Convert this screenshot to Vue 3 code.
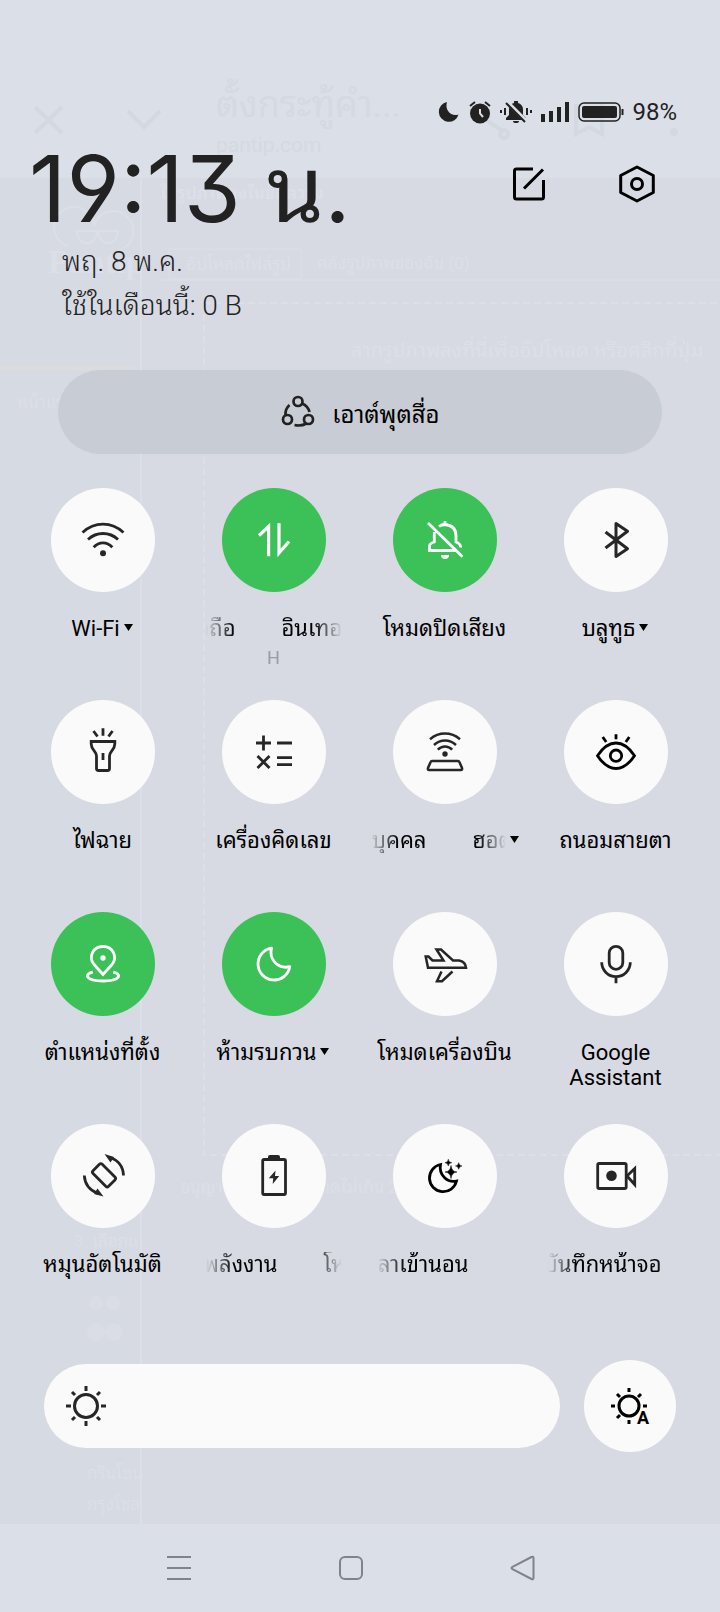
<template>
  <div class="panel">
    <!-- web page showing faintly through the shade -->
    <svg class="backdrop" width="720" height="1612" viewBox="0 0 720 1612" aria-hidden="true">
      <rect y="178" width="720" height="1346" fill="#d7dae3" />
      <rect y="178" width="141" height="1346" fill="#d6dae2" />
      <g fill="none" stroke="#d4d8e0" stroke-width="4">
        <path d="M35 107l27 26M62 107l-27 26M128 111l16 16 16-16M576 104v30l13-7 13 7v-30M482 117l22 15" />
        <circle cx="504" cy="134" r="4" />
      </g>
      <circle cx="674" cy="132" r="4" fill="#d4d8e0" />
      <g fill="#d5d9e1">
        <text x="216" y="117" font-size="36">ตั้งกระทู้คำ...</text>
        <text x="216" y="152" font-size="21">pantip.com</text>
      </g>
      <g fill="none" stroke="#dcdfe7" stroke-width="2">
        <path d="M141 178v1346" />
        <path d="M169 249h132v30h-132z" stroke-width="1" />
        <path d="M158 280h562" stroke-width="1" />
        <path d="M204 303h516M204 303v852h516" stroke-dasharray="7 4" />
        <path d="M68 246a20 20 0 1 1 26-20a20 20 0 1 1 30 22M77 231h20a9 11 0 0 1-20 0zM98 231h20a9 11 0 0 1-20 0z" />
      </g>
      <path d="M0 368h135" stroke="#dadcdf" stroke-width="5" />
      <g fill="#dcdfe8" font-size="17">
        <text x="48" y="273" font-size="34" font-weight="700" font-family="Liberation Serif, serif">Pantip</text>
        <text x="160" y="199" font-weight="700">ใส่รูปภาพลงในข้อความ</text>
        <text x="186" y="270">อัปโหลดไฟล์รูป</text>
        <text x="317" y="269">คลังรูปภาพของฉัน (0)</text>
        <text x="351" y="357" font-size="20">ลากรูปภาพลงที่นี่เพื่ออัปโหลด หรือคลิกที่ปุ่ม</text>
        <text x="17" y="408">หน้าแรก</text>
        <text x="180" y="1193">อนุญาตเฉพาะไฟล์ขนาดไม่เกิน 20 MB (0/10)</text>
        <text x="74" y="1247">3. เลือกแ</text>
        <text x="87" y="1479">กรีนโซน</text>
        <text x="87" y="1510">กรุงโซล</text>
      </g>
      <g fill="#dadde5">
        <circle cx="96" cy="1303" r="7" />
        <circle cx="113" cy="1303" r="7" />
        <circle cx="96" cy="1332" r="9" />
        <circle cx="114" cy="1332" r="9" />
      </g>
    </svg>

    <header class="top">
      <div class="status">
        <svg width="22" height="24" viewBox="0 0 22 24" fill="#222">
          <path d="M9 2A10 10 0 1 0 20.500 14.500C13 17 6.500 10 9 2Z" />
        </svg>
        <svg width="24" height="24" viewBox="0 0 24 24">
          <circle cx="12" cy="13.500" r="10" fill="#222" />
          <path d="M12 9v4.500l3 3.500" fill="none" stroke="#dbdfe7" stroke-width="2" />
          <path d="M2 6l5-4M22 6l-5-4" stroke="#222" stroke-width="2" />
        </svg>
        <svg width="32" height="24" viewBox="0 0 32 24">
          <path d="M6 20v-2l3-3V9a7 7 0 0 1 5-6V1h4v2a7 7 0 0 1 5 6v6l3 3v2zM13 21h6a3 2 0 0 1-6 0z" fill="#222" />
          <path d="M7 2l20 20" stroke="#dbdfe7" stroke-width="4" />
          <path d="M6 3l19 19M1 10v3M5 8v7M27 8v7M31 10v3" stroke="#222" stroke-width="2" />
        </svg>
        <svg width="30" height="24" viewBox="0 0 30 24" fill="#222">
          <path d="M1 14h4v8H1zM9 11h4v11H9zM17 7h4v15h-4zM25 2h4v20h-4z" />
        </svg>
        <svg width="46" height="24" viewBox="0 0 46 24">
          <rect x="1" y="3" width="41" height="18" rx="5" fill="none" stroke="#222" stroke-width="1.500" />
          <rect x="4" y="6" width="35" height="12" rx="2" fill="#222" />
          <path d="M44.500 9v6" stroke="#222" stroke-width="2" />
        </svg>
        <span>98%</span>
      </div>

      <div class="clock-row">
        <time class="clock">19:13 น.</time>
        <div class="actions">
          <button type="button" class="icon-btn" aria-label="แก้ไข">
            <svg width="40" height="40" viewBox="0 0 40 40" fill="none" stroke="#000" stroke-width="3">
              <path d="M24 5H7.500q-2 0-2 2V33q0 2 2 2H32.500q2 0 2-2V16M34 5.500L15 24.500" />
            </svg>
          </button>
          <button type="button" class="icon-btn" aria-label="การตั้งค่า">
            <svg width="40" height="40" viewBox="0 0 40 40" fill="none" stroke="#000" stroke-width="3" stroke-linejoin="round">
              <path d="M20 3L36.300 11.500V28.500L20 37L3.700 28.500V11.500Z" />
              <circle cx="20" cy="20" r="5.500" />
            </svg>
          </button>
        </div>
      </div>

      <p class="info">พฤ. 8 พ.ค.</p>
      <p class="info">ใช้ในเดือนนี้: 0 B</p>
    </header>

    <button type="button" class="media">
      <svg width="36" height="36" viewBox="0 0 36 36" fill="none" stroke="#222" stroke-width="2.700">
        <circle cx="18" cy="7.500" r="4.500" />
        <circle cx="7.500" cy="25.500" r="4.500" />
        <circle cx="28.500" cy="25.500" r="4.500" />
        <path d="M22 9.500Q28 12 29.500 18M9.500 11Q5 15 5.500 21M26.500 29.500Q21 32.500 14.500 31" />
      </svg>
      <span>เอาต์พุตสื่อ</span>
    </button>

    <main class="tiles">
      <button
        v-for="tile in tiles"
        :key="tile.id"
        type="button"
        class="tile"
        :class="{ active: tile.active }"
        :aria-pressed="tile.active"
        @click="tile.active = !tile.active"
      >
        <span class="circle">
          <svg class="glyph" width="52" height="52" viewBox="0 0 52 52" v-html="icons[tile.id]"></svg>
        </span>
        <span class="label">
          <span v-if="tile.tail" class="marquee">
            <span class="tail" :style="{ width: tile.tail + 'px' }">{{ tile.label }}</span>
            <span v-if="tile.tail < 90">{{ tile.label }}</span>
          </span>
          <span v-else class="name">{{ tile.label }}</span>
          <svg v-if="tile.menu" class="caret" width="10" height="12" viewBox="0 0 10 12">
            <path d="M0 1h9L4.500 8z" />
          </svg>
        </span>
        <span v-if="tile.note" class="note">{{ tile.note }}</span>
      </button>
    </main>

    <section class="brightness">
      <label class="slider">
        <svg class="sun" width="44" height="44" viewBox="0 0 44 44" fill="none" stroke="#262626" stroke-width="3">
          <circle cx="22" cy="22" r="11.500" />
          <path d="M22 2v5M22 37v5M2 22h5M37 22h5M8 8l3 3M33 33l3 3M36 8l-3 3M11 33l-3 3" />
        </svg>
        <input v-model="level" type="range" min="0" max="100" aria-label="ความสว่าง" />
      </label>
      <button type="button" class="auto" aria-label="ความสว่างอัตโนมัติ">
        <svg width="44" height="44" viewBox="0 0 44 44">
          <g fill="none" stroke="#000" stroke-width="3">
            <circle cx="21" cy="22" r="10" />
            <path d="M21 4v4M21 36v4M3 22h4M35 22h4M9 10l3 3M33 10l-3 3M9 34l3-3" />
          </g>
          <text x="29" y="40" font-size="18" font-weight="700" font-family="Roboto, sans-serif">A</text>
        </svg>
      </button>
    </section>

    <nav class="navbar">
      <button type="button" class="icon-btn" aria-label="ล่าสุด">
        <svg width="28" height="28" viewBox="0 0 28 28" class="nav-glyph">
          <path d="M2 3h24M2 14h24M2 25h24" />
        </svg>
      </button>
      <button type="button" class="icon-btn" aria-label="หน้าหลัก">
        <svg width="28" height="28" viewBox="0 0 28 28" class="nav-glyph">
          <rect x="3" y="3" width="22" height="22" rx="5" />
        </svg>
      </button>
      <button type="button" class="icon-btn" aria-label="กลับ">
        <svg width="28" height="28" viewBox="0 0 28 28" class="nav-glyph">
          <path d="M22.500 3L3.500 12.800q-2 1.200 0 2.400L22.500 25q2 .8 2-1.200V4.200q0-2-2-1.200z" />
        </svg>
      </button>
    </nav>
  </div>
</template>

<script setup>
import { ref } from 'vue';

const level = ref(100);

// tail: visible width of the scrolled-out copy in a marquee label
const tiles = ref([
  { id: 'wifi', label: 'Wi-Fi', active: false, menu: true },
  { id: 'data', label: 'อินเทอร์เน็ตมือถือ', active: true, tail: 30, note: 'H' },
  { id: 'mute', label: 'โหมดปิดเสียง', active: true },
  { id: 'bluetooth', label: 'บลูทูธ', active: false, menu: true },
  { id: 'torch', label: 'ไฟฉาย', active: false },
  { id: 'calc', label: 'เครื่องคิดเลข', active: false },
  { id: 'hotspot', label: 'ฮอตสปอตส่วนบุคคล', active: false, tail: 57, menu: true },
  { id: 'eye', label: 'ถนอมสายตา', active: false },
  { id: 'location', label: 'ตำแหน่งที่ตั้ง', active: true },
  { id: 'dnd', label: 'ห้ามรบกวน', active: true, menu: true },
  { id: 'plane', label: 'โหมดเครื่องบิน', active: false },
  { id: 'mic', label: 'Google Assistant', active: false },
  { id: 'rotate', label: 'หมุนอัตโนมัติ', active: false },
  { id: 'battery', label: 'โหมดประหยัดพลังงาน', active: false, tail: 72 },
  { id: 'sleep', label: 'เวลาเข้านอน', active: false, tail: 92 },
  { id: 'record', label: 'บันทึกหน้าจอ', active: false, tail: 114 }
]);

const icons = {
  wifi: `<path d="M5.500 18.500C17.500 7.300 34.500 7.300 46.500 18.500M11 25.500C19.500 17.500 32.500 17.500 41 25.500M16.700 33.300C22 27.500 30 27.500 35.300 33.300"/>
    <circle cx="26" cy="39.300" r="3" fill="currentColor" stroke="none"/>`,
  data: '<path d="M11 21.500L20.600 12.500V42.300M31 9.300V39L41 27.500" stroke-width="3.200"/>',
  mute: `<path d="M20 12.500Q22.500 10.500 26 10.500Q37 11.500 37 22V28Q42 30 41.500 33.500M15.300 18V28Q10.500 29.500 10.500 32V36.500H37M26 7v4M9 9L43.500 42.800"/>
    <path d="M22 41h8a4 4 0 0 1-8 0z" fill="currentColor" stroke="none"/>`,
  bluetooth: '<path d="M15.500 18L37.500 34.700L26 42.500V9.500L37.500 17.300L15.500 34" stroke-width="3" stroke-linejoin="round"/>',
  torch: '<path d="M26 2.300v7.400M16.500 5l4 5.500M35.500 5l-4 5.500M26 27v7M14.200 15.500H37.800V18C37.800 24 32.500 25 32.500 30V42.500q0 2-2 2H21.500q-2 0-2-2V30C19.500 25 14.200 24 14.200 18Z"/>',
  calc: '<path d="M8 17h15M15.500 9.500v15M29 17h15M9.500 30l12 12M21.500 30l-12 12M29 31.700h15M29 38.700h15"/>',
  hotspot: `<path d="M11 13.300C20 5.700 32 5.700 41 13.300M15 19C21.500 13 30.500 13 37 19M18.800 23.700C23 19.300 29 19.300 33.200 23.700" stroke-width="2.500"/>
    <circle cx="26" cy="28" r="2.700" fill="currentColor" stroke="none"/>
    <path d="M13 35H39q1 0 1.400 1L43 42q.5 2-1 2H10q-1.500 0-1-2L11.600 36q.4-1 1.400-1z" stroke-width="2.500"/>`,
  eye: '<g stroke="#000"><path d="M7.500 29.700Q16 17 26 17T44.500 29.700Q36 42.500 26 42.500T7.500 29.700ZM26 8.300v5M12.700 11l3.500 5M39.300 11l-3.500 5"/><circle cx="26" cy="29.700" r="5.700"/></g>',
  location: `<path d="M26 36.500L17 26.500C11 19 16 8.500 26 8.500S41 19 35 26.500ZM15.800 34.200C7 36 8 43 26 43S45 36 36.200 34.200"/>
    <circle cx="26" cy="20" r="2.700" fill="currentColor" stroke="none"/>`,
  dnd: '<path d="M23.500 10.200A16 16 0 1 0 41.800 28.700C30.500 31.500 20.500 21.500 23.500 10.200Z" stroke-linejoin="round"/>',
  plane: '<path d="M6.700 18.500H9.500L13.500 22.500H24.500L17.500 11.500H22L34 22.500H40Q46.500 23.500 47 29.700H9ZM22.500 33.500L18 43.200H23L33.500 33.500" stroke-width="2.500"/>',
  mic: '<rect x="19.200" y="8.300" width="13.600" height="23" rx="6.800"/><path d="M11.700 24.300a14.300 14.300 0 0 0 28.600 0M26 38.600v6.700"/>',
  rotate: `<rect x="20.500" y="14.300" width="13" height="22" rx="2" transform="rotate(-45 27 25.300)"/>
    <path d="M46.500 25.500Q46 12 33 7.500M7.300 25.500Q8 38.500 21 43.500"/>
    <path d="M27.500 4L37 7L33.500 12.500ZM26.500 46.500L17 44L20.500 38.500Z" fill="currentColor" stroke="none"/>`,
  battery: `<rect x="14.700" y="9.500" width="22.800" height="35" rx="1.500"/>
    <path d="M20 9V7q0-2 2-2H30q2 0 2 2V9zM27.500 20.500L20.800 28.300H25.200L24.700 34L31.200 26H27z" fill="currentColor" stroke="none"/>`,
  sleep: `<path d="M21.500 14.500A13.700 13.700 0 1 0 37.500 31C28.500 33 19.500 25 21.500 14.500Z" stroke="#000"/>
    <path d="M32 15.500Q32.500 21.500 38 22Q32.500 22.500 32 28.500Q31.500 22.500 26 22Q31.500 21.500 32 15.500ZM29.300 9.300Q29.500 12.500 32.700 12.700Q29.500 13 29.300 16Q29 13 26 12.700Q29 12.500 29.300 9.300ZM39.700 12.700Q40 15.700 43 16Q40 16.300 39.700 19.300Q39.400 16.300 36.500 16Q39.400 15.700 39.700 12.700Z" fill="#000" stroke="#000" stroke-width=".5"/>`,
  record: `<rect x="7.700" y="13.500" width="28.500" height="25" rx="1.500"/><path d="M37 26L44.700 18.500V34.500Z"/>
    <circle cx="21.500" cy="25.700" r="5.300" fill="currentColor" stroke="none"/>`
};
</script>

<style>
body {
  background: #dbdfe7;
}
</style>

<style scoped>
.panel {
  position: relative;
  overflow: hidden;
  min-height: 100vh;
  background: #dbdfe7;
  color: #222;
  font-family: Roboto, "Noto Sans Thai Looped", Loma, Waree, Garuda, "Noto Sans Thai", sans-serif;
}

.panel > * {
  position: relative;
}

.panel > .backdrop {
  position: absolute;
  top: 0;
  left: 0;
}

button {
  margin: 0;
  padding: 0;
  border: none;
  background: none;
  color: inherit;
  font: inherit;
  cursor: pointer;
}

.icon-btn {
  display: flex;
}

.top {
  padding: 98px 43px 0 29px;
}

.status {
  display: flex;
  justify-content: flex-end;
  align-items: center;
  gap: 8px;
  height: 28px;
  font-size: 24px;
}

.clock-row {
  display: flex;
  justify-content: space-between;
  align-items: center;
  height: 114px;
}

.clock {
  padding-top: 12px;
  font-family: Inter, "Noto Sans Thai Looped", Loma, Waree, Garuda, "Noto Sans Thai", sans-serif;
  font-size: 92px;
  line-height: 96px;
  font-feature-settings: "cv04", "cv09";
  white-space: nowrap;
}

.actions {
  display: flex;
  gap: 68px;
  padding: 2px 20px 0 0;
}

.info {
  margin: 0;
  padding-left: 33px;
  font-size: 28px;
  font-weight: 300;
  line-height: 44px;
}

.media {
  display: flex;
  justify-content: center;
  align-items: center;
  gap: 16px;
  width: calc(100% - 116px);
  height: 84px;
  margin: 42px 58px 34px;
  border-radius: 42px;
  background: #c8ccd5;
  color: #000;
  font-size: 24px;
}

.tiles {
  display: grid;
  grid-template-columns: repeat(4, 1fr);
  grid-auto-rows: 212px;
  padding: 0 19px 0 17px;
}

.tile {
  display: flex;
  flex-direction: column;
  align-items: center;
  color: #000;
  font-size: 22px;
  line-height: 25px;
}

.circle {
  display: flex;
  flex: none;
  justify-content: center;
  align-items: center;
  width: 104px;
  height: 104px;
  margin-bottom: 24px;
  border-radius: 50%;
  background: #fafafa;
  color: #262626;
}

.active .circle {
  background: #3cc058;
  color: #fff;
}

.glyph {
  fill: none;
  stroke: currentColor;
  stroke-width: 2.8;
}

.label {
  display: flex;
  align-items: center;
  gap: 4px;
}

.name {
  max-width: 140px;
}

.marquee {
  display: flex;
  gap: 46px;
  width: 136px;
  overflow: hidden;
  white-space: nowrap;
  mask-image: linear-gradient(to right, transparent, #000 28px, #000 108px, transparent);
}

.tail {
  display: flex;
  flex: none;
  justify-content: flex-end;
}

.note {
  margin-top: 4px;
  color: #9a9da4;
  font-size: 18px;
}

.brightness {
  display: flex;
  align-items: center;
  gap: 24px;
  padding: 24px 44px 72px;
}

.slider {
  position: relative;
  flex: 1;
  height: 84px;
}

.slider input {
  appearance: none;
  display: block;
  width: 100%;
  height: 100%;
  margin: 0;
  border-radius: 42px;
  background: #fafafa;
}

.slider input::-webkit-slider-thumb {
  appearance: none;
  width: 84px;
  height: 84px;
}

.sun {
  position: absolute;
  top: 20px;
  left: 20px;
}

.auto {
  display: flex;
  justify-content: center;
  align-items: center;
  width: 92px;
  height: 92px;
  border-radius: 50%;
  background: #fafafa;
}

.navbar {
  display: flex;
  justify-content: center;
  align-items: center;
  gap: 144px;
  height: 88px;
  padding-right: 18px;
}

.nav-glyph {
  fill: none;
  stroke: #808389;
  stroke-width: 2;
}
</style>
